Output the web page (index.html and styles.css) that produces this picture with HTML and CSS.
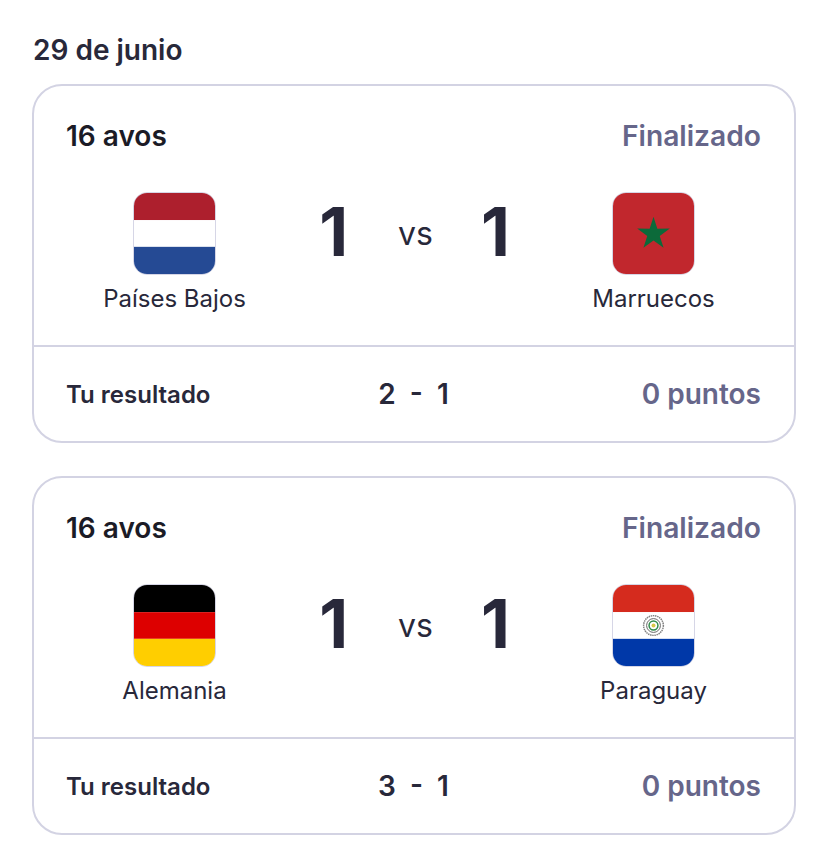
FILE: index.html
```html
<!DOCTYPE html>
<html>
<head>
    <title>Resultados</title>
    <link rel="stylesheet" href="styles.css">
</head>
<body>
    <h2 class="day">29 de junio</h2>

    <div class="card">
        <div class="match">
            <div class="match-head">
                <span class="round">16 avos</span>
                <span class="status">Finalizado</span>
            </div>
            <div class="match-body">
                <div class="team">
                    <svg class="flag" viewBox="0 0 82 82">
                        <rect width="82" height="27.5" fill="#ad1f2d"/>
                        <rect y="27.5" width="82" height="27" fill="#fff"/>
                        <rect y="54.5" width="82" height="27.5" fill="#254a94"/>
                    </svg>
                    <span class="team-name">Países Bajos</span>
                </div>
                <div class="score">
                    <span class="goals">1</span>
                    <span class="vs">vs</span>
                    <span class="goals">1</span>
                </div>
                <div class="team">
                    <svg class="flag" viewBox="0 0 82 82">
                        <rect width="82" height="82" fill="#c1272d"/>
                        <polygon points="41,24 44.9,36.2 57.5,36 47.3,43.5 51.2,55.5 41,48.1 30.8,55.5 34.7,43.5 24.5,36 37.1,36.2" fill="#0c6a3a"/>
                    </svg>
                    <span class="team-name">Marruecos</span>
                </div>
            </div>
        </div>
        <div class="pick">
            <span class="pick-label">Tu resultado</span>
            <span class="pick-score">2&nbsp; - &nbsp;1</span>
            <span class="pick-points">0 puntos</span>
        </div>
    </div>

    <div class="card">
        <div class="match">
            <div class="match-head">
                <span class="round">16 avos</span>
                <span class="status">Finalizado</span>
            </div>
            <div class="match-body">
                <div class="team">
                    <svg class="flag" viewBox="0 0 82 82">
                        <rect width="82" height="27.5" fill="#000"/>
                        <rect y="27.5" width="82" height="27" fill="#dd0000"/>
                        <rect y="54.5" width="82" height="27.5" fill="#ffce00"/>
                    </svg>
                    <span class="team-name">Alemania</span>
                </div>
                <div class="score">
                    <span class="goals">1</span>
                    <span class="vs">vs</span>
                    <span class="goals">1</span>
                </div>
                <div class="team">
                    <svg class="flag" viewBox="0 0 82 82">
                        <rect width="82" height="27.5" fill="#d52b1e"/>
                        <rect y="27.5" width="82" height="27" fill="#fff"/>
                        <rect y="54.5" width="82" height="27.5" fill="#0038a8"/>
                        <circle cx="41" cy="41" r="10" fill="#fff" stroke="#808080" stroke-width="1.500" stroke-dasharray="1.500 0.700"/>
                        <circle cx="41" cy="41" r="7" fill="none" stroke="#666" stroke-width="1"/>
                        <circle cx="41" cy="41" r="4.500" fill="none" stroke="#2f8a4a" stroke-width="1.500"/>
                        <circle cx="41" cy="41" r="2" fill="#d8c94a"/>
                    </svg>
                    <span class="team-name">Paraguay</span>
                </div>
            </div>
        </div>
        <div class="pick">
            <span class="pick-label">Tu resultado</span>
            <span class="pick-score">3&nbsp; - &nbsp;1</span>
            <span class="pick-points">0 puntos</span>
        </div>
    </div>
</body>
</html>
```

FILE: styles.css
```css
body {
    margin: 0;
    padding: 0 32px;
    font-family: Inter, "Liberation Sans", sans-serif;
    background-color: #fff;
    color: #28283a;
}
.day {
    margin: 0 0 0 1px;
    padding-top: 34px;
    height: 50px;
    line-height: 32px;
    font-size: 28px;
    font-weight: 600;
}
.card {
    height: 359px;
    box-sizing: border-box;
    margin-bottom: 33px;
    border: 2px solid #d3d3e3;
    border-radius: 30px;
}
.match {
    height: 261px;
    box-sizing: border-box;
    padding: 0 33px 0 32px;
    border-bottom: 2px solid #d3d3e3;
}
.match-head {
    display: flex;
    justify-content: space-between;
    align-items: center;
    height: 106px;
    box-sizing: border-box;
    padding-bottom: 6px;
}
.round {
    font-size: 28px;
    font-weight: 600;
    color: #1b1b26;
}
.status {
    font-size: 28.2px;
    font-weight: 600;
    color: #66668a;
}
.match-body {
    display: grid;
    grid-template-columns: 217px 1fr 215px;
}
.team {
    display: flex;
    flex-direction: column;
    align-items: center;
}
.flag {
    width: 83px;
    height: 83px;
    box-sizing: border-box;
    border: 1.5px solid #d6d6e6;
    border-radius: 14px;
}
.team-name {
    margin-top: 10px;
    font-size: 24px;
    line-height: 28px;
}
.score {
    display: flex;
    justify-content: center;
    align-items: center;
    gap: 50px;
    height: 78px;
}
.goals {
    font-size: 67px;
    font-weight: 700;
}
.vs {
    font-size: 32px;
    padding-top: 4px;
    margin-right: -2px;
}
.pick {
    display: grid;
    grid-template-columns: 1fr 1fr 1fr;
    align-items: center;
    height: 94px;
    padding: 0 33px 0 32px;
}
.pick-label {
    font-size: 24px;
    font-weight: 600;
}
.pick-score {
    font-size: 28px;
    font-weight: 600;
    text-align: center;
}
.pick-points {
    font-size: 28px;
    font-weight: 600;
    color: #66668a;
    text-align: right;
}
```
